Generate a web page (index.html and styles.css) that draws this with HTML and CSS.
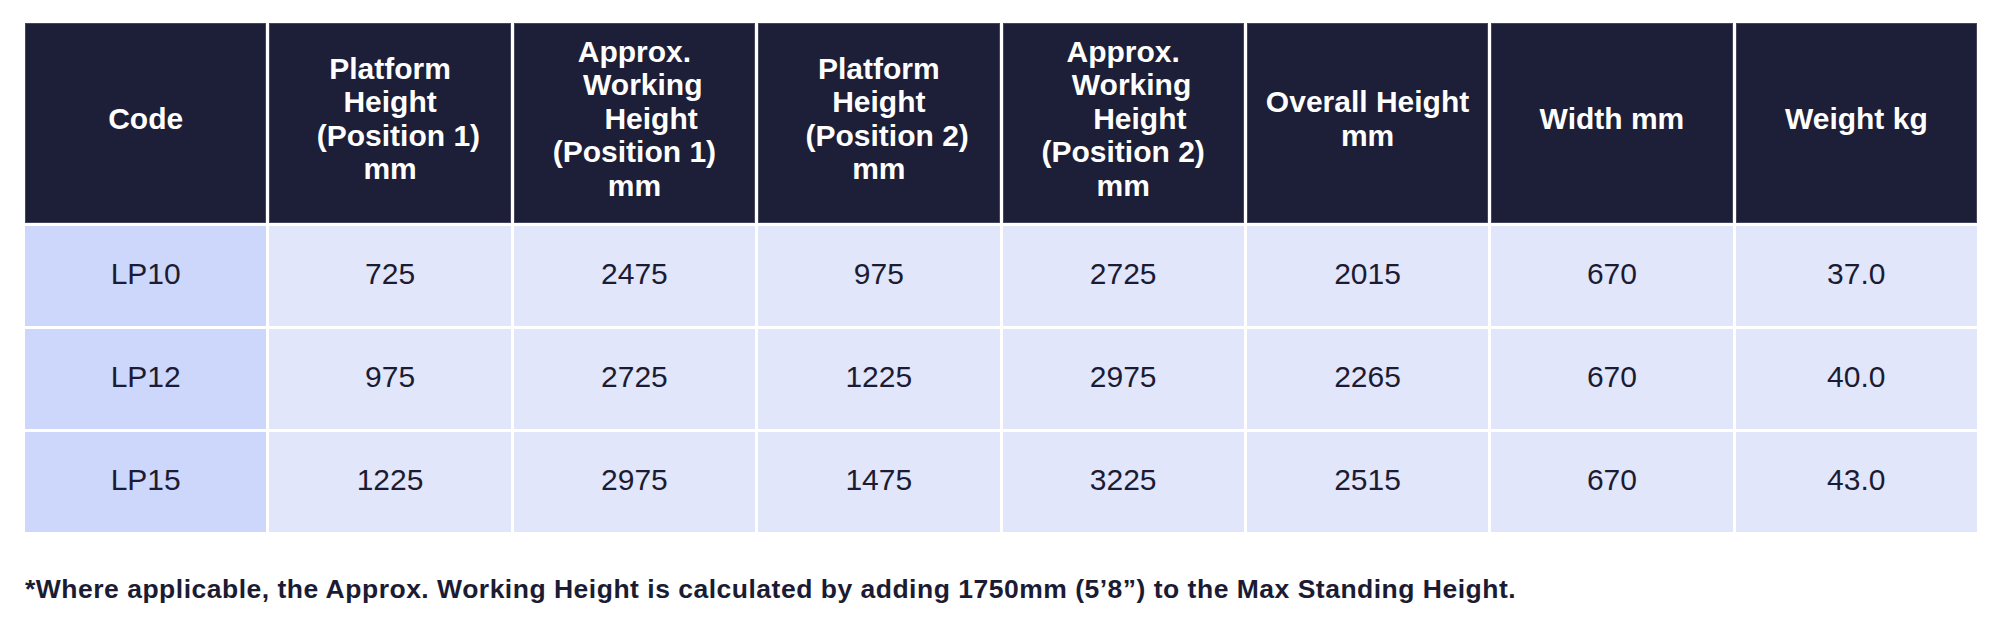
FILE: index.html
```html
<!DOCTYPE html>
<html lang="en">
<head>
<meta charset="utf-8">
<title>LP Platform Specifications</title>
<link rel="stylesheet" href="styles.css">
</head>
<body>
<main class="page">
  <table class="spec">
    <thead>
      <tr>
        <th>Code</th>
        <th>Platform<br>Height<br>&nbsp;&nbsp;(Position 1)<br>mm</th>
        <th>Approx.<br>&nbsp;&nbsp;Working<br>&nbsp;&nbsp;&nbsp;&nbsp;Height<br>(Position 1)<br>mm</th>
        <th>Platform<br>Height<br>&nbsp;&nbsp;(Position 2)<br>mm</th>
        <th>Approx.<br>&nbsp;&nbsp;Working<br>&nbsp;&nbsp;&nbsp;&nbsp;Height<br>(Position 2)<br>mm</th>
        <th>Overall Height<br>mm</th>
        <th>Width mm</th>
        <th>Weight kg</th>
      </tr>
    </thead>
    <tbody>
      <tr>
        <td class="code">LP10</td>
        <td>725</td><td>2475</td><td>975</td><td>2725</td><td>2015</td><td>670</td><td>37.0</td>
      </tr>
      <tr>
        <td class="code">LP12</td>
        <td>975</td><td>2725</td><td>1225</td><td>2975</td><td>2265</td><td>670</td><td>40.0</td>
      </tr>
      <tr>
        <td class="code">LP15</td>
        <td>1225</td><td>2975</td><td>1475</td><td>3225</td><td>2515</td><td>670</td><td>43.0</td>
      </tr>
    </tbody>
  </table>
  <p class="note">*Where applicable, the Approx. Working Height is calculated by adding 1750mm (5’8”) to the Max Standing Height.</p>
</main>
</body>
</html>
```

FILE: styles.css
```css
html, body {
  margin: 0;
  padding: 0;
  background: #ffffff;
}

body {
  font-family: "Liberation Sans", Arial, Helvetica, sans-serif;
  color: #1b1c34;
}

.page {
  padding: 20px 20px 0 22px;
}

.spec {
  width: 1958px;
  table-layout: fixed;
  border-collapse: separate;
  border-spacing: 3px;
}

.spec th {
  height: 200px;
  box-sizing: border-box;
  padding: 0 6px 9px;
  background: #1d1e37;
  color: #ffffff;
  font-size: 30px;
  font-weight: 700;
  line-height: 33.5px;
  text-align: center;
  vertical-align: middle;
  box-shadow: inset 0 0 0 1px #45465c;
}

.spec td {
  height: 100px;
  box-sizing: border-box;
  padding: 0 6px 5px;
  background: #e1e6fb;
  color: #1b1c34;
  font-size: 30px;
  line-height: 34px;
  text-align: center;
  vertical-align: middle;
}

.spec td.code {
  background: #cdd6fb;
}

.note {
  margin: 39px 0 0 3px;
  font-size: 26.5px;
  line-height: 30px;
  letter-spacing: 0.5px;
  font-weight: 700;
  color: #1b1c34;
}
```
